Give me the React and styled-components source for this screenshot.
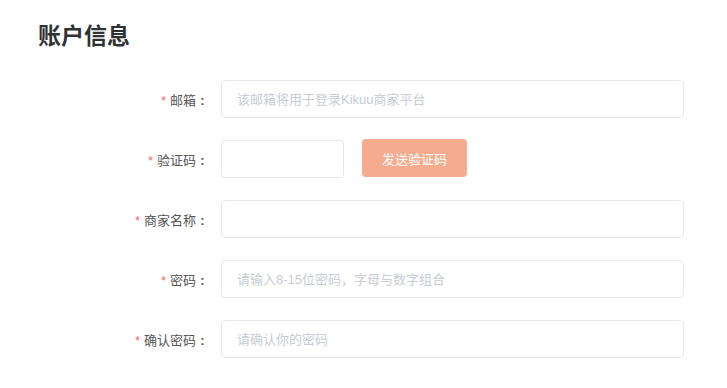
import React from "react";
import styled, { createGlobalStyle } from "styled-components";

const GlobalStyle = createGlobalStyle`
  html, body {
    margin: 0;
    padding: 0;
    background: #fff;
  }
  body {
    font-family: "Liberation Sans", "Noto Sans CJK SC", sans-serif;
  }
`;

const Page = styled.div`
  padding: 20px 0 0 38px;
  width: 727px;
  box-sizing: border-box;
`;

const Title = styled.h2`
  margin: 0;
  font-size: 23px;
  line-height: 32px;
  font-weight: 700;
  color: #303133;
`;

const Form = styled.form`
  margin-top: 28px;
  display: flex;
  flex-direction: column;
  gap: 22px;
`;

const Row = styled.div`
  display: flex;
  align-items: center;
  height: 38px;
`;

const Label = styled.label`
  width: 183px;
  box-sizing: border-box;
  padding-right: 12px;
  text-align: right;
  font-size: 13px;
  color: #555;
  white-space: nowrap;
`;

const Star = styled.span`
  color: #f56c6c;
  margin-right: 4px;
`;

/* full-width colon, drawn centred in its em box */
const Colon = styled.span`
  display: inline-block;
  width: 13px;
  text-align: center;
  font-weight: 700;
`;

const Input = styled.input`
  width: ${(p) => p.$width}px;
  height: 38px;
  box-sizing: border-box;
  border: 1px solid #e4e7ed;
  border-radius: 4px;
  padding: 0 15px;
  font-size: 13px;
  font-family: inherit;
  color: #606266;
  outline: none;
  &::placeholder {
    color: #c8cbd2;
  }
`;

const SendButton = styled.button`
  margin-left: 18px;
  margin-top: -2px;
  width: 105px;
  height: 38px;
  border: none;
  border-radius: 4px;
  background: #f5ac8e;
  color: #fff;
  font-size: 13px;
  font-family: inherit;
  cursor: pointer;
`;

const fields = [
  { label: "邮箱", placeholder: "该邮箱将用于登录Kikuu商家平台" },
  { label: "验证码", placeholder: "", code: true },
  { label: "商家名称", placeholder: "" },
  { label: "密码", placeholder: "请输入8-15位密码，字母与数字组合", type: "password" },
  { label: "确认密码", placeholder: "请确认你的密码", type: "password" },
];

export default function App() {
  return (
    <>
      <GlobalStyle />
      <Page lang="zh-CN">
        <Title>账户信息</Title>
        <Form onSubmit={(e) => e.preventDefault()}>
          {fields.map((f) => (
            <Row key={f.label}>
              <Label>
                <Star>*</Star>
                {f.label}
                <Colon>:</Colon>
              </Label>
              {f.code ? (
                <>
                  <Input $width={123} />
                  <SendButton type="button">发送验证码</SendButton>
                </>
              ) : (
                <Input $width={463} type={f.type || "text"} placeholder={f.placeholder} />
              )}
            </Row>
          ))}
        </Form>
      </Page>
    </>
  );
}
